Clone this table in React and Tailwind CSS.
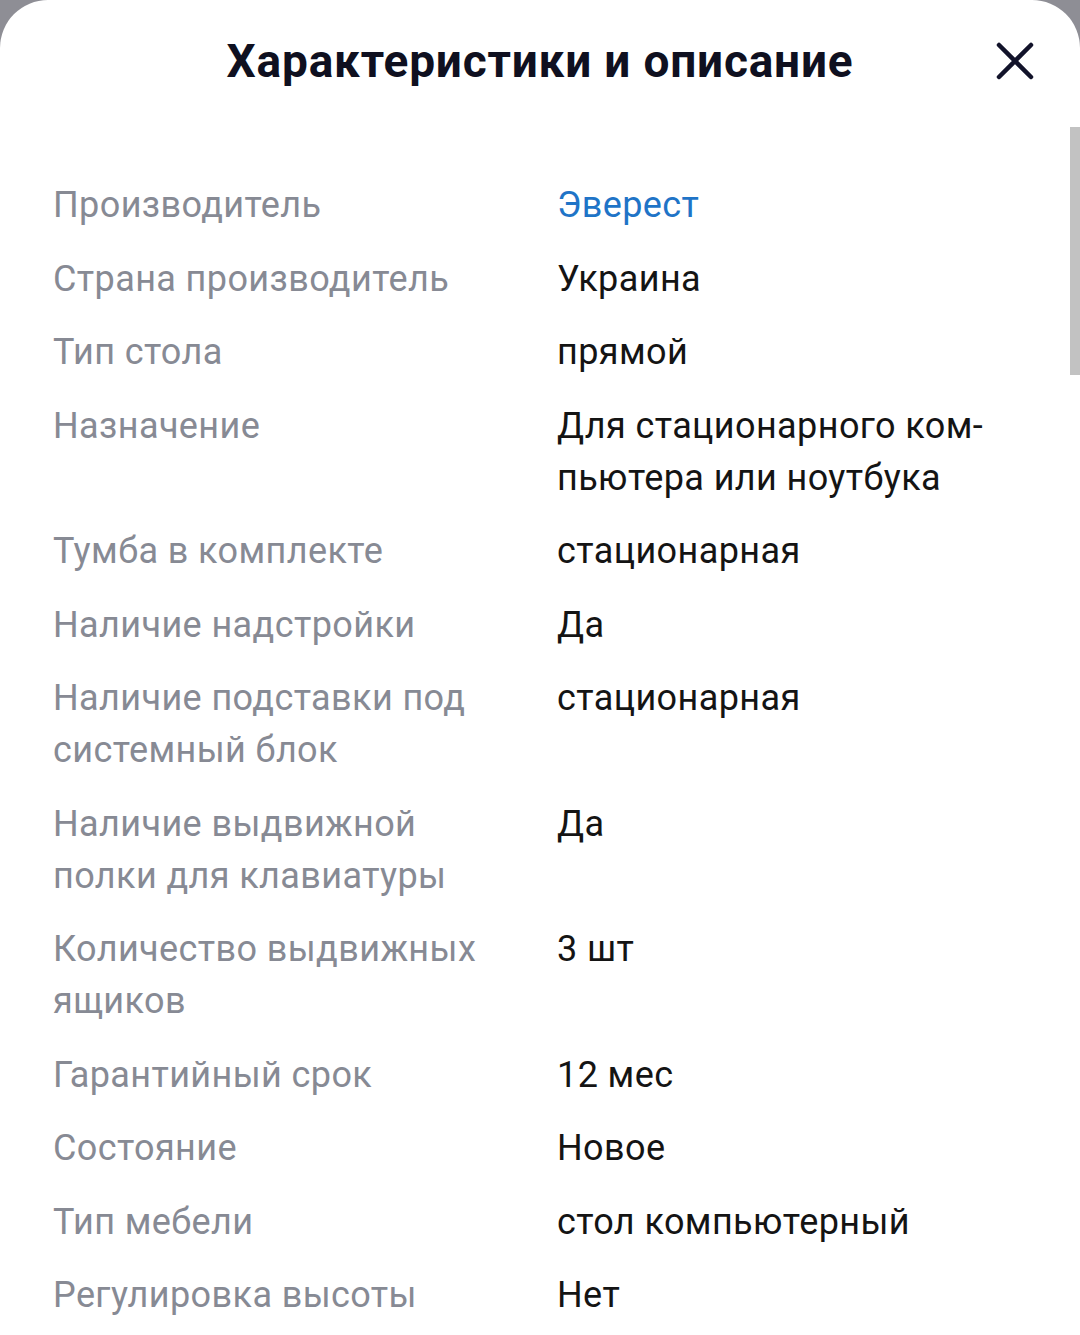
const specs = [
  { label: 'Производитель', value: 'Эверест', link: true },
  { label: 'Страна производитель', value: 'Украина' },
  { label: 'Тип стола', value: 'прямой' },
  { label: 'Назначение', value: ['Для стационарного ком-', 'пьютера или ноутбука'] },
  { label: 'Тумба в комплекте', value: 'стационарная' },
  { label: 'Наличие надстройки', value: 'Да' },
  { label: 'Наличие подставки под системный блок', value: 'стационарная' },
  { label: 'Наличие выдвижной полки для клавиатуры', value: 'Да' },
  { label: 'Количество выдвижных ящиков', value: '3 шт' },
  { label: 'Гарантийный срок', value: '12 мес' },
  { label: 'Состояние', value: 'Новое' },
  { label: 'Тип мебели', value: 'стол компьютерный' },
  { label: 'Регулировка высоты', value: 'Нет' },
]

function CloseIcon() {
  return (
    <svg width="38" height="38" viewBox="0 0 38 38" fill="none">
      <path
        d="M3 3 L35 35 M35 3 L3 35"
        stroke="#12132a"
        strokeWidth="4.5"
        strokeLinecap="round"
      />
    </svg>
  )
}

export default function App() {
  return (
    <div className="min-h-[1335px] w-[1080px] bg-[#8e8e95] font-['Roboto',sans-serif]">
      <div className="relative min-h-[1335px] overflow-hidden rounded-t-[48px] bg-white">
        <header className="relative flex h-[122px] items-center justify-center">
          <h1 className="text-[46px] font-bold leading-none tracking-[0.8px] text-[#0f1020]">
            Характеристики и описание
          </h1>
          <button type="button" className="absolute right-[46px] top-[42px]">
            <CloseIcon />
          </button>
        </header>

        <div className="absolute right-0 top-[127px] h-[248px] w-[10px] bg-[#c2c2c2]" />

        <dl className="flex flex-col gap-[21.5px] pl-[53px] pt-[57px]">
          {specs.map((row) => (
            <div key={row.label} className="flex text-[36px] leading-[52px] tracking-[0.4px]">
              <dt className="w-[445px] shrink-0 text-[#878a94]">{row.label}</dt>
              <dd className="ml-[59px] text-[#141414]">
                {Array.isArray(row.value) ? (
                  row.value.map((line) => <div key={line}>{line}</div>)
                ) : row.link ? (
                  <span className="text-[#1f74c7]">{row.value}</span>
                ) : (
                  row.value
                )}
              </dd>
            </div>
          ))}
        </dl>
      </div>
    </div>
  )
}
